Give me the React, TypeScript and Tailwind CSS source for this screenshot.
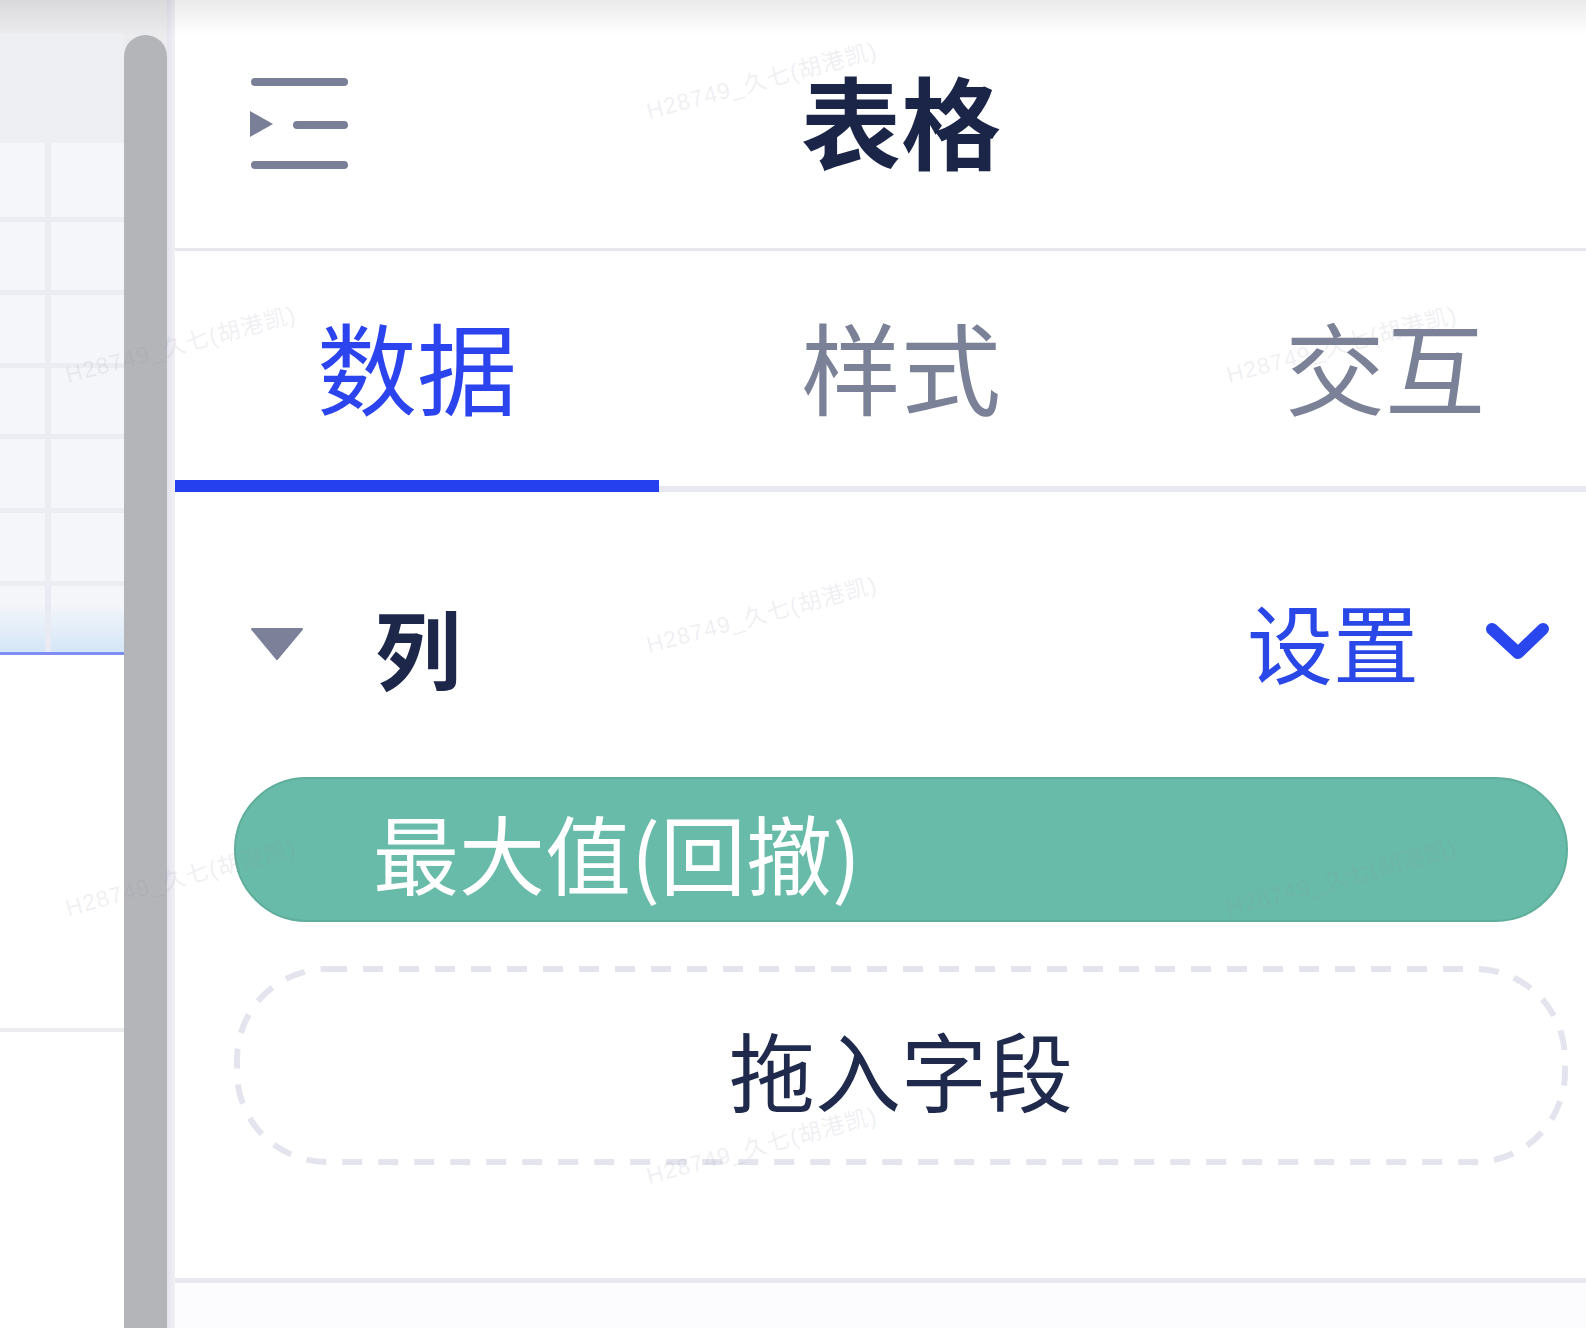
import React from "react"

const tabs = ["数据", "样式", "交互"]

const marks = [
  { x: "left-[650px]", y: "top-[100px]" },
  { x: "left-[69px]", y: "top-[364px]" },
  { x: "left-[1230px]", y: "top-[364px]" },
  { x: "left-[650px]", y: "top-[634px]" },
  { x: "left-[69px]", y: "top-[897px]" },
  { x: "left-[1230px]", y: "top-[897px]" },
  { x: "left-[650px]", y: "top-[1165px]" },
]

const rowHeights = ["h-[79px]", "h-[73px]", "h-[73px]", "h-[71px]", "h-[74px]", "h-[73px]"]

function IndentIcon() {
  return (
    <svg width="101" height="100" viewBox="0 0 101 100" fill="none">
      <line x1="6" y1="8" x2="95" y2="8" stroke="#7a7f98" strokeWidth="8" strokeLinecap="round" />
      <line x1="48" y1="51" x2="95" y2="51" stroke="#7a7f98" strokeWidth="8" strokeLinecap="round" />
      <line x1="6" y1="91" x2="95" y2="91" stroke="#7a7f98" strokeWidth="8" strokeLinecap="round" />
      <polygon points="1,37 24,50 1,63" fill="#7a7f98" />
    </svg>
  )
}

export default function App() {
  return (
    <div className="relative flex h-[1328px] w-[1586px] overflow-hidden bg-white font-['Noto_Sans_CJK_SC',sans-serif]">
      {/* canvas strip on the left */}
      <div className="flex w-[124px] shrink-0 flex-col bg-white">
        <div className="h-[33px] bg-[#ececee]" />
        <div className="h-[110px] bg-[#eeeff3]" />
        <div className="flex flex-col bg-[#f5f6fa]">
          {rowHeights.map((h, i) => (
            <div key={i} className={`flex ${h} border-b-[5px] border-[#ecedf2]`}>
              <div className="w-[51px] border-r-[6px] border-[#ecedf2]" />
              <div className="flex-1" />
            </div>
          ))}
          <div className="flex h-[66px] bg-linear-to-b from-[#f5f6fa] from-25% to-[#d4e6f7]">
            <div className="w-[51px] border-r-[6px] border-[#e8ebf3]" />
            <div className="flex-1" />
          </div>
        </div>
        <div className="h-[3px] bg-[#7f8df2]" />
        <div className="h-[373px]" />
        <div className="h-[4px] bg-[#ececee]" />
      </div>

      {/* scrollbar */}
      <div className="w-[43px] shrink-0 bg-[#ececee] pt-[35px]">
        <div className="h-full rounded-t-full bg-[#b4b5b9]" />
      </div>
      <div className="w-[8px] shrink-0 bg-linear-to-r from-[#e5e4ee] to-[#f1f0f6]" />

      {/* property panel */}
      <div className="flex w-[1452px] shrink-0 flex-col bg-white">
        <div className="grid h-[251px] shrink-0 grid-cols-[1fr_auto_1fr] items-center border-b-[3px] border-[#e6e7ef] px-[74px]">
          <IndentIcon />
          <span className="-mt-[10px] text-[100px] font-bold leading-none text-[#1b2548]">表格</span>
          <span />
        </div>

        <div className="flex h-[241px] shrink-0 border-b-[6px] border-[#e7e8f0]">
          {tabs.map((t, i) => (
            <div
              key={t}
              className={`relative flex w-[484px] shrink-0 items-center justify-center pb-[8px] text-[100px] leading-none ${
                i === 0 ? "text-[#2b44ee]" : "text-[#7b8197]"
              }`}
            >
              {t}
              {i === 0 && <div className="absolute -bottom-[6px] left-0 h-[12px] w-full bg-[#2540ee]" />}
            </div>
          ))}
        </div>

        <div className="flex shrink-0 flex-col border-b-[5px] border-[#e8e8f0] px-[59px] pb-[113px] pt-[110px]">
          <div className="flex h-[90px] items-center pl-[17px] pr-[15px]">
            <svg width="52" height="32" viewBox="0 0 52 32" className="-mt-[6px]">
              <polygon points="1,1 51,1 26,31" fill="#7c8099" stroke="#7c8099" strokeWidth="2" strokeLinejoin="round" />
            </svg>
            <span className="ml-[72px] text-[86px] font-bold leading-none text-[#1c2749]">列</span>
            <span className="ml-auto -mt-[12px] text-[86px] leading-none text-[#2a48e8]">设置</span>
            <svg width="72" height="50" viewBox="0 0 72 50" fill="none" className="ml-[62px] -mt-[12px]">
              <polyline points="11,13 37,37 62,13" stroke="#2a46ee" strokeWidth="12" strokeLinecap="round" strokeLinejoin="round" />
            </svg>
          </div>

          <div className="mt-[85px] flex h-[145px] items-center rounded-full border-2 border-[#5eae9b] bg-[#68bba9] pl-[137px] pt-[4px]">
            <span className="text-[86px] leading-none text-white">最大值(回撤)</span>
          </div>

          <div className="relative mt-[44px] flex h-[199px] items-center justify-center pt-[6px]">
            <svg className="absolute inset-0" width="1334" height="199" viewBox="0 0 1334 199" fill="none">
              <rect x="3" y="3" width="1328" height="193" rx="90" stroke="#e4e4ee" strokeWidth="6" strokeDasharray="20 16" />
            </svg>
            <span className="relative text-[86px] leading-none text-[#1f2a4d]">拖入字段</span>
          </div>
        </div>
        <div className="flex-1 bg-[#fcfcfe]" />
      </div>

      {/* top shade */}
      <div className="pointer-events-none absolute inset-x-0 top-0 h-[36px] bg-linear-to-b from-black/[0.08] to-transparent" />

      {/* watermark */}
      {marks.map((m, i) => (
        <span
          key={i}
          className={`pointer-events-none absolute ${m.x} ${m.y} origin-bottom-left -rotate-[15deg] whitespace-nowrap font-['Liberation_Sans','Noto_Sans_CJK_SC',sans-serif] text-[23px] leading-none tracking-[1px] text-[#8c8ca0]/15`}
        >
          H28749_久七(胡港凯)
        </span>
      ))}
    </div>
  )
}
